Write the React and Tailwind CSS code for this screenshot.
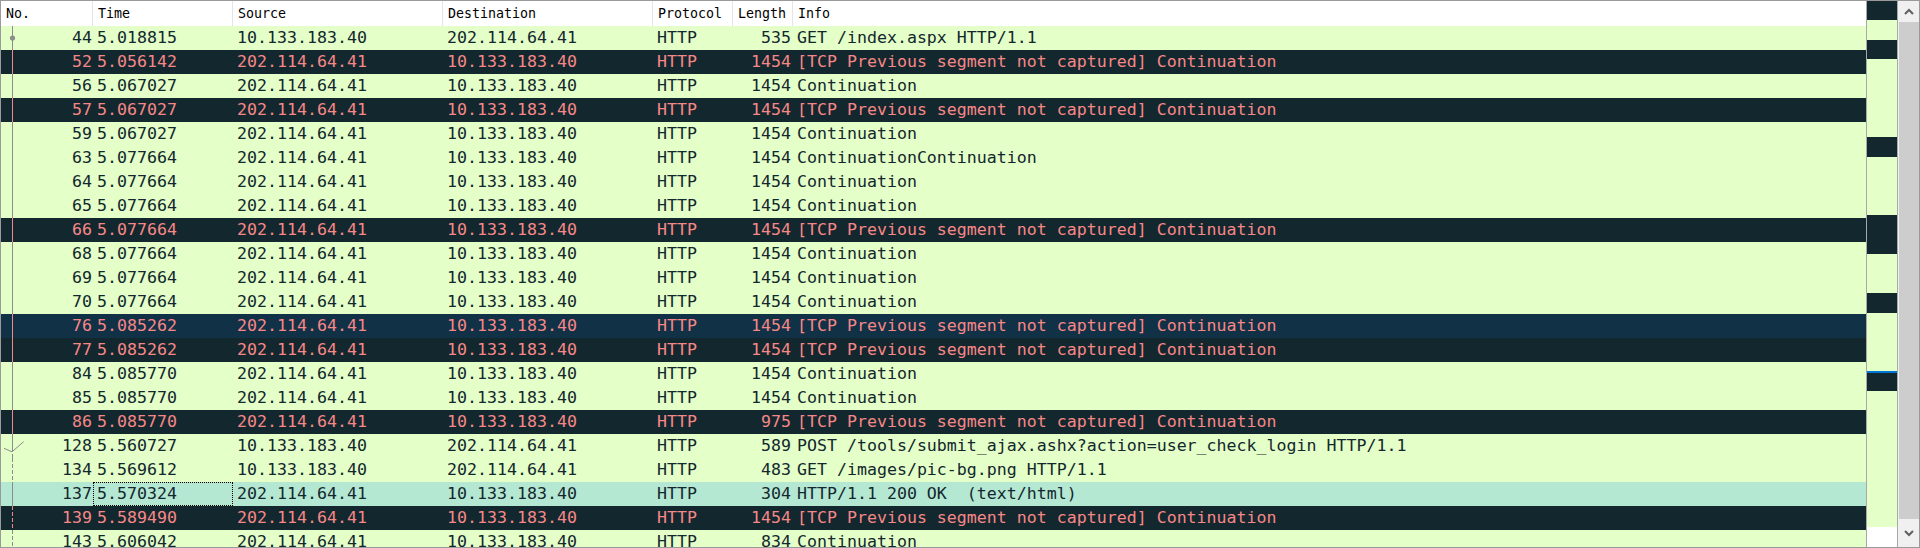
import React from 'react';

const A = '10.133.183.40';
const B = '202.114.64.41';
const LOST = '[TCP Previous segment not captured] Continuation';

// kind: g = http green, d = bad tcp, h = hovered bad tcp, s = selected
const packets = [
  { no: 44, t: '5.018815', src: A, dst: B, len: 535, info: 'GET /index.aspx HTTP/1.1', kind: 'g', tree: 'dot' },
  { no: 52, t: '5.056142', src: B, dst: A, len: 1454, info: LOST, kind: 'd', tree: 'line' },
  { no: 56, t: '5.067027', src: B, dst: A, len: 1454, info: 'Continuation', kind: 'g', tree: 'line' },
  { no: 57, t: '5.067027', src: B, dst: A, len: 1454, info: LOST, kind: 'd', tree: 'line' },
  { no: 59, t: '5.067027', src: B, dst: A, len: 1454, info: 'Continuation', kind: 'g', tree: 'line' },
  { no: 63, t: '5.077664', src: B, dst: A, len: 1454, info: 'ContinuationContinuation', kind: 'g', tree: 'line' },
  { no: 64, t: '5.077664', src: B, dst: A, len: 1454, info: 'Continuation', kind: 'g', tree: 'line' },
  { no: 65, t: '5.077664', src: B, dst: A, len: 1454, info: 'Continuation', kind: 'g', tree: 'line' },
  { no: 66, t: '5.077664', src: B, dst: A, len: 1454, info: LOST, kind: 'd', tree: 'line' },
  { no: 68, t: '5.077664', src: B, dst: A, len: 1454, info: 'Continuation', kind: 'g', tree: 'line' },
  { no: 69, t: '5.077664', src: B, dst: A, len: 1454, info: 'Continuation', kind: 'g', tree: 'line' },
  { no: 70, t: '5.077664', src: B, dst: A, len: 1454, info: 'Continuation', kind: 'g', tree: 'line' },
  { no: 76, t: '5.085262', src: B, dst: A, len: 1454, info: LOST, kind: 'h', tree: 'line' },
  { no: 77, t: '5.085262', src: B, dst: A, len: 1454, info: LOST, kind: 'd', tree: 'line' },
  { no: 84, t: '5.085770', src: B, dst: A, len: 1454, info: 'Continuation', kind: 'g', tree: 'line' },
  { no: 85, t: '5.085770', src: B, dst: A, len: 1454, info: 'Continuation', kind: 'g', tree: 'line' },
  { no: 86, t: '5.085770', src: B, dst: A, len: 975, info: LOST, kind: 'd', tree: 'line' },
  { no: 128, t: '5.560727', src: A, dst: B, len: 589, info: 'POST /tools/submit_ajax.ashx?action=user_check_login HTTP/1.1', kind: 'g', tree: 'check' },
  { no: 134, t: '5.569612', src: A, dst: B, len: 483, info: 'GET /images/pic-bg.png HTTP/1.1', kind: 'g', tree: 'dash' },
  { no: 137, t: '5.570324', src: B, dst: A, len: 304, info: 'HTTP/1.1 200 OK  (text/html)', kind: 's', tree: 'line' },
  { no: 139, t: '5.589490', src: B, dst: A, len: 1454, info: LOST, kind: 'd', tree: 'dash' },
  { no: 143, t: '5.606042', src: B, dst: A, len: 834, info: 'Continuation', kind: 'g', tree: 'dash' },
];

const rowStyle = {
  g: 'bg-[#e4ffc7] text-[#12272e]',
  d: 'bg-[#12272e] text-[#f78787]',
  h: 'bg-[#113146] text-[#f78787]',
  s: 'bg-[#b5e8d2] text-[#12272e]',
};

// minimap strip, heights in px
const minimap = [
  ['d', 19], ['g', 20], ['d', 19], ['g', 78], ['d', 20], ['g', 58], ['d', 39],
  ['g', 39], ['d', 20], ['g', 58], ['b', 2], ['d', 18], ['g', 136],
];

function Tree({ type, dark }) {
  const c = dark ? '#f78787' : '#8c8c8c';
  return (
    <svg width="24" height="24" className="shrink-0">
      {type === 'dot' && (
        <>
          <line x1="11.5" y1="0" x2="11.5" y2="24" stroke={c} />
          <circle cx="11.5" cy="12" r="2.6" fill={c} />
        </>
      )}
      {type === 'line' && <line x1="11.5" y1="0" x2="11.5" y2="24" stroke={c} />}
      {type === 'dash' && <line x1="11.5" y1="0" x2="11.5" y2="24" stroke={c} strokeDasharray="4 2" />}
      {type === 'check' && (
        <>
          <line x1="11.5" y1="0" x2="11.5" y2="18" stroke={c} />
          <line x1="11.5" y1="20" x2="11.5" y2="24" stroke={c} strokeDasharray="4 2" />
          <polyline points="3,14.3 11,17.8 22.7,7.7" fill="none" stroke={c} />
        </>
      )}
    </svg>
  );
}

function Header() {
  const cols = [
    ['No.', 'w-[92px]'],
    ['Time', 'w-[140px]'],
    ['Source', 'w-[210px]'],
    ['Destination', 'w-[210px]'],
    ['Protocol', 'w-[80px]'],
    ['Length', 'w-[60px]'],
  ];
  return (
    <div className="flex h-[25px] shrink-0 items-center bg-white text-[13.3px] text-black">
      {cols.map(([label, w]) => (
        <div key={label} className={`${w} flex h-full shrink-0 items-center border-r border-[#e5e5e5] pl-[5px]`}>
          {label}
        </div>
      ))}
      <div className="flex-1 pl-[5px]">Info</div>
    </div>
  );
}

function Row({ p }) {
  const dark = p.kind === 'd' || p.kind === 'h';
  return (
    <div className={`flex h-[24px] shrink-0 items-center whitespace-pre ${rowStyle[p.kind]}`}>
      <div className="flex h-full w-[92px] shrink-0 items-center">
        <Tree type={p.tree} dark={dark} />
        <div className="flex-1 pr-[1px] text-right">{p.no}</div>
      </div>
      <div
        className={`flex h-full w-[140px] shrink-0 items-center pl-[4px] ${
          p.kind === 's' ? 'outline-1 -outline-offset-1 outline-dotted outline-black' : ''
        }`}
      >
        {p.t}
      </div>
      <div className="w-[210px] shrink-0 pl-[4px]">{p.src}</div>
      <div className="w-[210px] shrink-0 pl-[4px]">{p.dst}</div>
      <div className="w-[80px] shrink-0 pl-[4px]">HTTP</div>
      <div className="w-[60px] shrink-0 pr-[2px] text-right">{p.len}</div>
      <div className="flex-1 pl-[4px]">{p.info}</div>
    </div>
  );
}

export default function App() {
  return (
    <div
      className="flex h-[548px] w-[1920px] overflow-hidden border border-[#9a9a9a] bg-white"
      style={{ fontFamily: '"DejaVu Sans Mono", "Liberation Mono", monospace' }}
    >
      <div className="flex min-w-0 flex-1 flex-col overflow-hidden text-[16.6px]">
        <Header />
        {packets.map((p) => (
          <Row key={p.no} p={p} />
        ))}
      </div>

      <div className="flex w-[31px] shrink-0 flex-col border-l border-[#a8a8a8]">
        {minimap.map(([k, h], i) => (
          <div
            key={i}
            className={k === 'd' ? 'bg-[#12272e]' : k === 'b' ? 'bg-[#0078d7]' : 'bg-[#e4ffc7]'}
            style={{ height: h }}
          />
        ))}
        <div className="flex-1 bg-white" />
      </div>

      <div className="flex w-[22px] shrink-0 flex-col border-l border-[#a8a8a8] bg-[#f0f0f0] pl-[1px]">
        <div className="flex h-[21px] shrink-0 items-center justify-center">
          <svg width="10" height="7" viewBox="0 0 10 7">
            <polyline points="1,6 5,2 9,6" fill="none" stroke="#606060" strokeWidth="2" />
          </svg>
        </div>
        <div className="h-[497px] shrink-0 bg-[#cdcdcd]" />
        <div className="flex flex-1 items-center justify-center">
          <svg width="10" height="7" viewBox="0 0 10 7">
            <polyline points="1,1 5,5 9,1" fill="none" stroke="#606060" strokeWidth="2" />
          </svg>
        </div>
      </div>
    </div>
  );
}
